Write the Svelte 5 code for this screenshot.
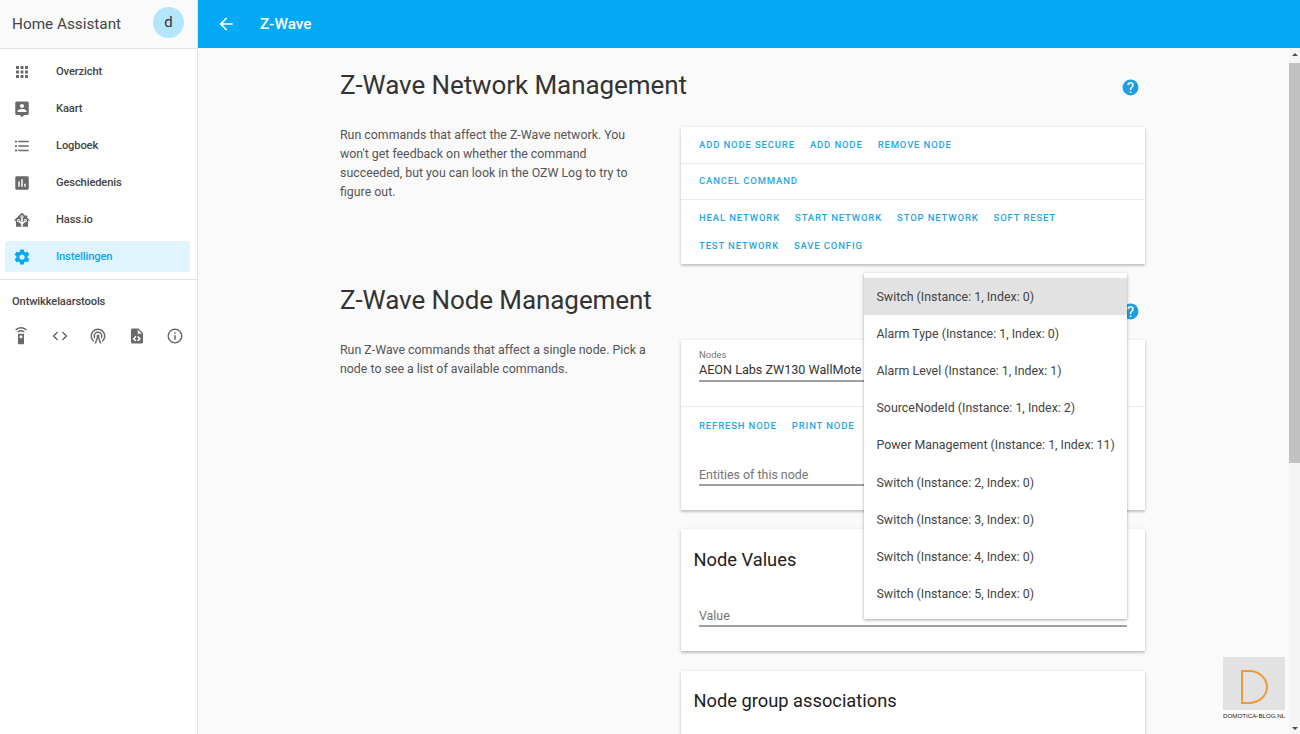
<script lang="ts">
	const icons = {
		apps: 'M16,20H20V16H16M16,14H20V10H16M10,8H14V4H10M16,8H20V4H16M10,14H14V10H10M4,14H8V10H4M4,20H8V16H4M10,20H14V16H10M4,8H8V4H4V8Z',
		map: 'M18,16H6V15.1C6,13.1 10,12 12,12C14,12 18,13.1 18,15.1M12,5.3C13.5,5.3 14.7,6.5 14.7,8C14.7,9.5 13.5,10.7 12,10.7C10.5,10.7 9.3,9.5 9.3,8C9.3,6.5 10.5,5.3 12,5.3M19,2H5C3.89,2 3,2.89 3,4V18A2,2 0 0,0 5,20H9L12,23L15,20H19A2,2 0 0,0 21,18V4C21,2.89 20.1,2 19,2Z',
		list: 'M7,5H21V7H7V5M7,13V11H21V13H7M4,4.5A1.5,1.5 0 0,1 5.5,6A1.5,1.5 0 0,1 4,7.5A1.5,1.5 0 0,1 2.5,6A1.5,1.5 0 0,1 4,4.5M4,10.5A1.5,1.5 0 0,1 5.5,12A1.5,1.5 0 0,1 4,13.5A1.5,1.5 0 0,1 2.5,12A1.5,1.5 0 0,1 4,10.5M7,19V17H21V19H7M4,16.5A1.5,1.5 0 0,1 5.5,18A1.5,1.5 0 0,1 4,19.5A1.5,1.5 0 0,1 2.5,18A1.5,1.5 0 0,1 4,16.5Z',
		chart: 'M9 17H7V10H9V17M13 17H11V7H13V17M17 17H15V13H17V17M19 3H5C3.9 3 3 3.9 3 5V19C3 20.1 3.9 21 5 21H19C20.1 21 21 20.1 21 19V5C21 3.9 20.1 3 19 3Z',
		hass: 'M21.8,13H20V21H13V17.67L15.79,14.88L16.5,15C17.66,15 18.6,14.06 18.6,12.9C18.6,11.74 17.66,10.8 16.5,10.8A2.1,2.1 0 0,0 14.4,12.9L14.5,13.61L13,15.13V9.65C13.66,9.29 14.1,8.6 14.1,7.8A2.1,2.1 0 0,0 12,5.7A2.1,2.1 0 0,0 9.9,7.8C9.9,8.6 10.34,9.29 11,9.65V15.13L9.5,13.61L9.6,12.9A2.1,2.1 0 0,0 7.5,10.8A2.1,2.1 0 0,0 5.4,12.9A2.1,2.1 0 0,0 7.5,15L8.21,14.88L11,17.67V21H4V13H2.25C1.83,13 1.42,13 1.42,12.79C1.43,12.57 1.85,12.15 2.28,11.72L11,3C11.33,2.67 11.67,2.33 12,2.33C12.33,2.33 12.67,2.67 13,3L17,7V6H19V9L21.78,11.78C22.18,12.18 22.59,12.59 22.6,12.8C22.6,13 22.2,13 21.8,13M7.5,12A0.9,0.9 0 0,1 8.4,12.9A0.9,0.9 0 0,1 7.5,13.8A0.9,0.9 0 0,1 6.6,12.9A0.9,0.9 0 0,1 7.5,12M16.5,12C17,12 17.4,12.4 17.4,12.9C17.4,13.4 17,13.8 16.5,13.8A0.9,0.9 0 0,1 15.6,12.9A0.9,0.9 0 0,1 16.5,12M12,6.9C12.5,6.9 12.9,7.3 12.9,7.8C12.9,8.3 12.5,8.7 12,8.7C11.5,8.7 11.1,8.3 11.1,7.8C11.1,7.3 11.5,6.9 12,6.9Z',
		cog: 'M12,15.5A3.5,3.5 0 0,1 8.5,12A3.5,3.5 0 0,1 12,8.5A3.5,3.5 0 0,1 15.5,12A3.5,3.5 0 0,1 12,15.5M19.43,12.97C19.47,12.65 19.5,12.33 19.5,12C19.5,11.67 19.47,11.34 19.43,11L21.54,9.37C21.73,9.22 21.78,8.95 21.66,8.73L19.66,5.27C19.54,5.05 19.27,4.96 19.05,5.05L16.56,6.05C16.04,5.66 15.5,5.32 14.87,5.07L14.5,2.42C14.46,2.18 14.25,2 14,2H10C9.75,2 9.54,2.18 9.5,2.42L9.13,5.07C8.5,5.32 7.96,5.66 7.44,6.05L4.95,5.05C4.73,4.96 4.46,5.05 4.34,5.27L2.34,8.73C2.21,8.95 2.27,9.22 2.46,9.37L4.57,11C4.53,11.34 4.5,11.67 4.5,12C4.5,12.33 4.53,12.65 4.57,12.97L2.46,14.63C2.27,14.78 2.21,15.05 2.34,15.27L4.34,18.73C4.46,18.95 4.73,19.03 4.95,18.95L7.44,17.94C7.96,18.34 8.5,18.68 9.13,18.93L9.5,21.58C9.54,21.82 9.75,22 10,22H14C14.25,22 14.46,21.82 14.5,21.58L14.87,18.93C15.5,18.67 16.04,18.34 16.56,17.94L19.05,18.95C19.27,19.03 19.54,18.95 19.66,18.73L21.66,15.27C21.78,15.05 21.73,14.78 21.54,14.63L19.43,12.97Z',
		remote: 'M12,0C8.96,0 6.21,1.23 4.22,3.22L5.63,4.63C7.26,3 9.5,2 12,2C14.5,2 16.74,3 18.36,4.64L19.77,3.23C17.79,1.23 15.04,0 12,0M7.05,6.05L8.46,7.46C9.37,6.56 10.62,6 12,6C13.38,6 14.63,6.56 15.54,7.46L16.95,6.05C15.68,4.78 13.93,4 12,4C10.07,4 8.32,4.78 7.05,6.05M12,15A2,2 0 0,1 10,13A2,2 0 0,1 12,11A2,2 0 0,1 14,13A2,2 0 0,1 12,15M15,9H9A1,1 0 0,0 8,10V22A1,1 0 0,0 9,23H15A1,1 0 0,0 16,22V10A1,1 0 0,0 15,9Z',
		code: 'M14.6,16.6L19.2,12L14.6,7.4L16,6L22,12L16,18L14.6,16.6M9.4,16.6L4.8,12L9.4,7.4L8,6L2,12L8,18L9.4,16.6Z',
		tower: 'M12,10A2,2 0 0,1 14,12C14,12.5 13.82,12.94 13.53,13.29L16.7,22H14.57L12,14.93L9.43,22H7.3L10.47,13.29C10.18,12.94 10,12.5 10,12A2,2 0 0,1 12,10M12,8A4,4 0 0,0 8,12C8,12.5 8.1,13 8.28,13.46L7.4,15.86C6.53,14.81 6,13.47 6,12A6,6 0 0,1 12,6A6,6 0 0,1 18,12C18,13.47 17.47,14.81 16.6,15.86L15.72,13.46C15.9,13 16,12.5 16,12A4,4 0 0,0 12,8M12,4A8,8 0 0,0 4,12C4,14.36 5,16.5 6.64,17.94L5.92,19.94C3.54,18.11 2,15.23 2,12A10,10 0 0,1 12,2A10,10 0 0,1 22,12C22,15.23 20.46,18.11 18.08,19.94L17.36,17.94C19,16.5 20,14.36 20,12A8,8 0 0,0 12,4Z',
		xml: 'M13,9H18.5L13,3.5V9M6,2H14L20,8V20A2,2 0 0,1 18,22H6C4.89,22 4,21.1 4,20V4C4,2.89 4.89,2 6,2M6.12,15.5L9.86,19.24L11.28,17.83L8.95,15.5L11.28,13.17L9.86,11.76L6.12,15.5M17.28,15.5L13.54,11.76L12.12,13.17L14.45,15.5L12.12,17.83L13.54,19.24L17.28,15.5Z',
		info: 'M11,9H13V7H11M12,20C7.59,20 4,16.41 4,12C4,7.59 7.59,4 12,4C16.41,4 20,7.59 20,12C20,16.41 16.41,20 12,20M12,2A10,10 0 0,0 2,12A10,10 0 0,0 12,22A10,10 0 0,0 22,12A10,10 0 0,0 12,2M11,17H13V11H11V17Z',
		help: 'M15.07,11.25L14.17,12.17C13.45,12.89 13,13.5 13,15H11V14.5C11,13.39 11.45,12.39 12.17,11.67L13.41,10.41C13.78,10.05 14,9.55 14,9C14,7.89 13.1,7 12,7A2,2 0 0,0 10,9H8A4,4 0 0,1 12,5A4,4 0 0,1 16,9C16,9.88 15.64,10.67 15.07,11.25M13,19H11V17H13M12,2A10,10 0 0,0 2,12A10,10 0 0,0 12,22A10,10 0 0,0 22,12C22,6.47 17.5,2 12,2Z',
		back: 'M20,11V13H8L13.5,18.5L12.08,19.92L4.16,12L12.08,4.08L13.5,5.5L8,11H20Z'
	};

	const nav = [
		{ label: 'Overzicht', icon: icons.apps },
		{ label: 'Kaart', icon: icons.map },
		{ label: 'Logboek', icon: icons.list },
		{ label: 'Geschiedenis', icon: icons.chart },
		{ label: 'Hass.io', icon: icons.hass },
		{ label: 'Instellingen', icon: icons.cog, active: true }
	];
	const tools = [icons.remote, icons.code, icons.tower, icons.xml, icons.info];

	const networkRows = [
		['Add node secure', 'Add node', 'Remove node'],
		['Cancel command'],
		['Heal network', 'Start network', 'Stop network', 'Soft reset', 'Test network', 'Save config']
	];

	const values = [
		'Switch (Instance: 1, Index: 0)',
		'Alarm Type (Instance: 1, Index: 0)',
		'Alarm Level (Instance: 1, Index: 1)',
		'SourceNodeId (Instance: 1, Index: 2)',
		'Power Management (Instance: 1, Index: 11)',
		'Switch (Instance: 2, Index: 0)',
		'Switch (Instance: 3, Index: 0)',
		'Switch (Instance: 4, Index: 0)',
		'Switch (Instance: 5, Index: 0)'
	];
</script>

<div class="shell">
	<aside class="sidebar">
		<div class="brand">
			<span>Home Assistant</span>
			<div class="avatar">d</div>
		</div>
		<nav>
			{#each nav as item}
				<div class="nav-item" class:active={item.active}>
					<svg viewBox="0 0 24 24" class="nav-icon"><path fill-rule="evenodd" d={item.icon} /></svg>
					<span>{item.label}</span>
				</div>
			{/each}
		</nav>
		<div class="tools">
			<div class="tools-title">Ontwikkelaarstools</div>
			<div class="tools-row">
				{#each tools as tool}
					<svg viewBox="0 0 24 24" class="tool-icon"><path d={tool} /></svg>
				{/each}
			</div>
		</div>
	</aside>

	<div class="page">
		<header class="topbar">
			<svg viewBox="0 0 24 24" class="back"><path d={icons.back} /></svg>
			<span>Z-Wave</span>
		</header>

		<div class="body">
			<main class="content">
				<section class="section first">
					<div class="heading">
						<h1>Z-Wave Network Management</h1>
						<svg viewBox="0 0 24 24" class="help"><path d={icons.help} /></svg>
					</div>
					<div class="columns">
						<p class="intro">
							Run commands that affect the Z-Wave network. You won't get feedback on whether the
							command succeeded, but you can look in the OZW Log to try to figure out.
						</p>
						<div class="card">
							{#each networkRows as row}
								<div class="actions">
									{#each row as label}
										<span class="action">{label}</span>
									{/each}
								</div>
							{/each}
						</div>
					</div>
				</section>

				<section class="section second">
					<div class="heading">
						<h1>Z-Wave Node Management</h1>
						<svg viewBox="0 0 24 24" class="help"><path d={icons.help} /></svg>
					</div>
					<div class="columns">
						<p class="intro">
							Run Z-Wave commands that affect a single node. Pick a node to see a list of available
							commands.
						</p>
						<div class="stack">
							<div class="card">
								<div class="node-picker">
									<div class="field-label">Nodes</div>
									<div class="field-value">AEON Labs ZW130 WallMote Quad</div>
								</div>
								<div class="node-actions">
									<div class="actions plain">
										<span class="action">Refresh node</span>
										<span class="action">Print node</span>
									</div>
									<div class="field entities">Entities of this node</div>
								</div>
							</div>
							<div class="card values">
								<h2>Node Values</h2>
								<div class="field">Value</div>
							</div>
							<div class="card groups">
								<h2>Node group associations</h2>
							</div>
						</div>
					</div>
				</section>

				<div class="popup">
					{#each values as value, i}
						<div class="option" class:selected={i === 0}>{value}</div>
					{/each}
				</div>

				<div class="watermark">
					<div class="mark"><div class="mark-d"></div></div>
					<div class="mark-text">DOMOTICA-BLOG.NL</div>
				</div>
			</main>

			<div class="scrollbar">
				<div class="arrow up"></div>
				<div class="thumb"></div>
				<div class="arrow down"></div>
			</div>
		</div>
	</div>
</div>

<style>
	:global(body) {
		margin: 0;
		font-family: Roboto, 'Noto Sans', sans-serif;
		background: #fafafa;
	}

	.shell {
		display: flex;
		width: 1300px;
		height: 734px;
		overflow: hidden;
	}

	.sidebar {
		width: 197px;
		flex: none;
		background: #fff;
		border-right: 1px solid #e4e4e4;
	}

	.brand {
		height: 49px;
		box-sizing: border-box;
		display: flex;
		align-items: center;
		justify-content: space-between;
		padding: 0 13px 0 12px;
		background: #fafafa;
		border-bottom: 1px solid #e4e4e4;
		font-size: 15.3px;
		color: #444;
	}

	.avatar {
		width: 31px;
		height: 31px;
		margin-bottom: 4px;
		border-radius: 50%;
		background: #b3e5fc;
		display: flex;
		align-items: center;
		justify-content: center;
		font-size: 15px;
		color: #333;
	}

	nav {
		display: flex;
		flex-direction: column;
		gap: 6px;
		padding-top: 7px;
		border-bottom: 1px solid #e4e4e4;
		height: 231px;
		box-sizing: border-box;
	}

	.nav-item {
		height: 31px;
		flex: none;
		margin: 0 7px 0 5px;
		display: flex;
		align-items: center;
		gap: 25px;
		padding-left: 8px;
		border-radius: 3px;
		font-size: 11.2px;
		letter-spacing: -0.15px;
		font-weight: 500;
		color: #444;
	}

	.nav-icon {
		width: 18px;
		height: 18px;
		fill: #6a6a6a;
		flex: none;
	}

	.nav-item.active {
		background: #e0f4fe;
		color: #03a9f4;
	}

	.active .nav-icon {
		fill: #03a9f4;
	}

	.tools-title {
		font-size: 11.2px;
		letter-spacing: -0.15px;
		font-weight: 500;
		color: #444;
		padding: 15px 12px 0;
		line-height: 14px;
	}

	.tools-row {
		display: flex;
		gap: 20.5px;
		padding: 18px 0 0 12px;
	}

	.tool-icon {
		width: 18px;
		height: 18px;
		fill: #6a6a6a;
		flex: none;
	}

	.page {
		flex: 1;
		min-width: 0;
		display: flex;
		flex-direction: column;
	}

	.topbar {
		height: 48px;
		flex: none;
		background: #03a9f4;
		display: flex;
		align-items: center;
		color: #fff;
		font-size: 15.3px;
		font-weight: 500;
		padding-left: 18px;
		gap: 24px;
	}

	.back {
		width: 20px;
		height: 20px;
		fill: #fff;
	}

	.body {
		flex: 1;
		min-height: 0;
		display: flex;
	}

	.content {
		flex: 1;
		min-width: 0;
		position: relative;
		overflow: hidden;
		padding-left: 142px;
	}

	.section {
		width: 805px;
	}

	.section.first {
		padding-top: 18px;
	}

	.section.second {
		padding-top: 17px;
	}

	.heading {
		display: flex;
		align-items: center;
		justify-content: space-between;
		height: 38px;
		padding-right: 5.5px;
	}

	h1 {
		margin: 0;
		font-size: 26px;
		letter-spacing: -0.08px;
		font-weight: 400;
		color: #333;
		line-height: 38px;
	}

	.help {
		width: 19px;
		height: 19px;
		fill: #1e9ee8;
		flex: none;
	}

	.first .help {
		margin-top: 4px;
	}

	.second .help {
		margin-top: 22px;
	}

	.columns {
		display: flex;
		align-items: flex-start;
		padding-top: 23px;
	}

	.second .columns {
		padding-top: 21px;
	}

	.intro {
		width: 310px;
		margin: 1px 31px 0 0;
		font-size: 12.37px;
		line-height: 19px;
		color: #555;
		flex: none;
	}

	.first .intro {
		margin-top: -1px;
	}

	.card {
		width: 464px;
		flex: none;
		background: #fff;
		box-shadow: 0 2px 2px rgba(0, 0, 0, 0.14), 0 1px 4px rgba(0, 0, 0, 0.14);
	}

	.actions {
		display: flex;
		flex-wrap: wrap;
		column-gap: 15px;
		row-gap: 18px;
		padding: 12px 18px 13px;
		border-bottom: 1px solid #ededed;
	}

	.actions:first-child {
		padding-top: 13px;
	}

	.actions:last-child {
		border-bottom: 0;
		padding-top: 13px;
		padding-bottom: 13px;
	}

	.action {
		font-size: 9.5px;
		line-height: 10px;
		font-weight: 500;
		letter-spacing: 0.85px;
		text-transform: uppercase;
		color: #1ea7e4;
		white-space: nowrap;
	}

	.stack {
		display: flex;
		flex-direction: column;
	}

	.node-picker {
		padding: 9px 18px 26px;
		height: 67px;
		box-sizing: border-box;
		border-bottom: 1px solid #ededed;
	}

	.field-label {
		font-size: 9.5px;
		line-height: 12px;
		color: #757575;
	}

	.field-value {
		font-size: 12.6px;
		line-height: 18px;
		color: #333;
		border-bottom: 2px solid #a0a0a0;
		height: 19px;
		overflow: hidden;
	}

	.node-actions {
		height: 103px;
		box-sizing: border-box;
	}

	.actions.plain {
		padding: 14px 18px 0;
		border: 0;
	}

	.field {
		margin: 0 18px;
		font-size: 12.4px;
		line-height: 18px;
		color: #757575;
		border-bottom: 2px solid #a0a0a0;
	}

	.field.entities {
		margin-top: 35px;
	}

	.values {
		margin-top: 19px;
		height: 122px;
		box-sizing: border-box;
		padding-top: 19px;
	}

	.groups {
		margin-top: 20px;
		height: 80px;
		box-sizing: border-box;
		padding-top: 18px;
	}

	h2 {
		margin: 0 0 35px 12.5px;
		font-size: 18.3px;
		font-weight: 400;
		line-height: 24px;
		color: #212121;
	}

	.popup {
		position: absolute;
		left: 666px;
		top: 225px;
		width: 263px;
		padding: 5px 0 7px;
		background: #fff;
		box-shadow: 0 1px 3px rgba(0, 0, 0, 0.35);
	}

	.option {
		height: 37.1px;
		box-sizing: border-box;
		display: flex;
		align-items: center;
		padding: 0 0 0 12.5px;
		font-size: 12.4px;
		color: #444;
		white-space: nowrap;
	}

	.option.selected {
		background: #e2e2e2;
	}

	.watermark {
		position: absolute;
		left: 1025px;
		top: 609px;
		width: 62px;
	}

	.mark {
		height: 53px;
		box-sizing: border-box;
		background: #e2e2e2;
		display: flex;
		align-items: center;
		justify-content: center;
		padding-top: 7px;
	}

	.mark-d {
		width: 23px;
		height: 30px;
		border: 2px solid #f09a37;
		border-radius: 0 70% 70% 0 / 0 50% 50% 0;
	}

	.mark-text {
		font-family: 'Liberation Sans', sans-serif;
		font-size: 6.2px;
		line-height: 10px;
		margin-top: 1px;
		text-align: center;
		color: #222;
		white-space: nowrap;
	}

	.scrollbar {
		width: 11px;
		flex: none;
		background: #f5f5f5;
		display: flex;
		flex-direction: column;
		align-items: center;
	}

	.thumb {
		width: 11px;
		height: 400px;
		background: #c1c1c1;
	}

	.arrow {
		width: 0;
		height: 0;
		border-left: 3px solid transparent;
		border-right: 3px solid transparent;
	}

	.arrow.up {
		border-bottom: 3px solid #505050;
		margin: 5px 0 7px;
	}

	.arrow.down {
		border-top: 3px solid #505050;
		margin-top: auto;
		margin-bottom: 4px;
	}
</style>
